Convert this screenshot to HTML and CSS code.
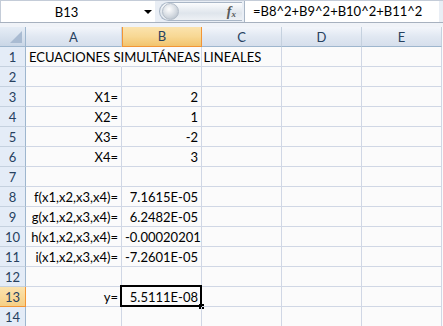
FILE: index.html
```html
<!DOCTYPE html>
<html lang="es">
<head>
    <meta charset="UTF-8">
    <title>Ecuaciones simultáneas lineales</title>
    <link rel="stylesheet" href="styles.css">
</head>
<body>
    <div class="formula-bar">
        <div class="name-box">
            <span class="name-text">B13</span>
            <span class="name-arrow"></span>
        </div>
        <div class="fx-pill">
            <span class="pill-knob"></span>
            <span class="fx">f<sub>x</sub></span>
        </div>
        <div class="formula-input">=B8^2+B9^2+B10^2+B11^2</div>
        <div class="formula-end"></div>
    </div>
    <div class="strip"></div>

    <div class="sheet">
        <!-- cabecera de columnas -->
        <div class="corner"><span class="corner-tri"></span></div>
        <div class="col-head">A</div>
        <div class="col-head active">B</div>
        <div class="col-head">C</div>
        <div class="col-head">D</div>
        <div class="col-head">E</div>

        <div class="row-head">1</div>
        <div class="cell overflow">ECUACIONES SIMULTÁNEAS LINEALES</div>
        <div class="cell"></div><div class="cell"></div><div class="cell"></div><div class="cell"></div>

        <div class="row-head">2</div>
        <div class="cell"></div><div class="cell"></div><div class="cell"></div><div class="cell"></div><div class="cell"></div>

        <div class="row-head">3</div>
        <div class="cell num">X1=</div><div class="cell num">2</div>
        <div class="cell"></div><div class="cell"></div><div class="cell"></div>

        <div class="row-head">4</div>
        <div class="cell num">X2=</div><div class="cell num">1</div>
        <div class="cell"></div><div class="cell"></div><div class="cell"></div>

        <div class="row-head">5</div>
        <div class="cell num">X3=</div><div class="cell num">-2</div>
        <div class="cell"></div><div class="cell"></div><div class="cell"></div>

        <div class="row-head">6</div>
        <div class="cell num">X4=</div><div class="cell num">3</div>
        <div class="cell"></div><div class="cell"></div><div class="cell"></div>

        <div class="row-head">7</div>
        <div class="cell"></div><div class="cell"></div><div class="cell"></div><div class="cell"></div><div class="cell"></div>

        <div class="row-head">8</div>
        <div class="cell num">f(x1,x2,x3,x4)=</div><div class="cell num">7.1615E-05</div>
        <div class="cell"></div><div class="cell"></div><div class="cell"></div>

        <div class="row-head">9</div>
        <div class="cell num">g(x1,x2,x3,x4)=</div><div class="cell num">6.2482E-05</div>
        <div class="cell"></div><div class="cell"></div><div class="cell"></div>

        <div class="row-head">10</div>
        <div class="cell num">h(x1,x2,x3,x4)=</div><div class="cell num">-0.00020201</div>
        <div class="cell"></div><div class="cell"></div><div class="cell"></div>

        <div class="row-head">11</div>
        <div class="cell num">i(x1,x2,x3,x4)=</div><div class="cell num">-7.2601E-05</div>
        <div class="cell"></div><div class="cell"></div><div class="cell"></div>

        <div class="row-head">12</div>
        <div class="cell"></div><div class="cell"></div><div class="cell"></div><div class="cell"></div><div class="cell"></div>

        <div class="row-head active">13</div>
        <div class="cell num">y=</div>
        <div class="cell num selected">5.5111E-08<span class="sel-box"></span><span class="fill-handle"></span></div>
        <div class="cell"></div><div class="cell"></div><div class="cell"></div>

        <div class="row-head">14</div>
        <div class="cell"></div><div class="cell"></div><div class="cell"></div><div class="cell"></div><div class="cell"></div>
    </div>
</body>
</html>
```

FILE: styles.css
```css
/* Estilos generales */
body {
    margin: 0;
    width: 443px;
    height: 326px;
    overflow: hidden;
    background-color: #fbfbfb;
    font-family: Lato, 'Liberation Sans', sans-serif;
    font-size: 13px;
    color: #000;
}

/* Barra de fórmulas */
.formula-bar {
    display: flex;
    height: 21px;
    border-top: 1px solid #c4ccd8;
    border-bottom: 1px solid #a7b1bf;
    background-color: #e9eef5;
}
.name-box {
    width: 154px;
    background-color: #fff;
    border-left: 1px solid #c4ccd8;
    display: flex;
    align-items: center;
}
.name-text {
    flex: 1;
    text-align: center;
    padding-right: 12px;
    line-height: 20px;
}
.name-arrow {
    width: 0;
    height: 0;
    border-left: 4px solid transparent;
    border-right: 4px solid transparent;
    border-top: 4px solid #000;
    margin-right: 3px;
    margin-top: 1px;
}
.fx-pill {
    width: 82px;
    margin: 1px 2px 1px 4px;
    border-radius: 10px 0 0 10px;
    border: 1px solid #a9b6c6;
    border-right: none;
    background: linear-gradient(#fbfcfd, #dfe5ec 60%, #eef1f5);
    display: flex;
    align-items: center;
    justify-content: space-between;
}
.pill-knob {
    width: 15px;
    height: 15px;
    border-radius: 50%;
    margin-left: 2px;
    background: radial-gradient(circle at 40% 35%, #ffffff, #d3d9e0 55%, #aab4c0);
    border: 1px solid #b3bdc9;
}
.fx {
    font-family: 'Liberation Serif', serif;
    font-style: italic;
    font-weight: bold;
    font-size: 14px;
    color: #5a5a5a;
    margin-right: 6px;
}
.fx sub {
    font-size: 9px;
    vertical-align: -1px;
}
.formula-input {
    flex: 1;
    background-color: #fff;
    border-left: 1px solid #a9b6c6;
    padding-left: 8px;
    line-height: 20px;
}
.formula-end {
    width: 4px;
    background-color: #e9eef5;
}
.strip {
    height: 4px;
    background-color: #f0f3f8;
}

/* Hoja */
.sheet {
    display: grid;
    grid-template-columns: 26px 96px 80px 80px 80px 80px;
    grid-auto-rows: 20px;
}
.corner {
    background: linear-gradient(#e6edf6, #c9d6e6);
    border-right: 1px solid #9eb6ce;
    border-bottom: 1px solid #9eb6ce;
    box-sizing: border-box;
    position: relative;
}
.corner-tri {
    position: absolute;
    right: 3px;
    bottom: 3px;
    width: 0;
    height: 0;
    border-left: 12px solid transparent;
    border-bottom: 12px solid #a9bbd2;
}
.col-head {
    box-sizing: border-box;
    background: linear-gradient(#f3f6fb, #e1e8f2 50%, #d6dfec);
    border-right: 1px solid #c5d1df;
    border-bottom: 1px solid #9eb6ce;
    text-align: center;
    line-height: 20px;
    color: #27415f;
}
.col-head.active {
    background: linear-gradient(#fbe3ae, #f8d894 50%, #f2c46d);
    border: 1px solid #f29536;
    border-top: none;
    line-height: 19px;
}
.row-head {
    box-sizing: border-box;
    background-color: #e4ecf7;
    border-right: 1px solid #9eb6ce;
    border-bottom: 1px solid #c5d1df;
    text-align: center;
    line-height: 21px;
    color: #27415f;
}
.row-head.active {
    background: linear-gradient(#fbe3ae, #f6cf85);
    border-right-color: #f29536;
    border-bottom-color: #f29536;
}
.cell {
    box-sizing: border-box;
    border-right: 1px solid #d0d7e5;
    border-bottom: 1px solid #d0d7e5;
    line-height: 21px;
    padding: 0 3px;
    white-space: nowrap;
    position: relative;
}
.cell.overflow {
    overflow: visible;
    border-right-color: transparent;
    z-index: 1;
}
.num {
    text-align: right;
}
.sel-box {
    position: absolute;
    left: -2px;
    top: -2px;
    right: -1px;
    bottom: -1px;
    border: 2px solid #000;
}
.fill-handle {
    position: absolute;
    right: -3px;
    bottom: -3px;
    width: 5px;
    height: 5px;
    background-color: #000;
}
```
